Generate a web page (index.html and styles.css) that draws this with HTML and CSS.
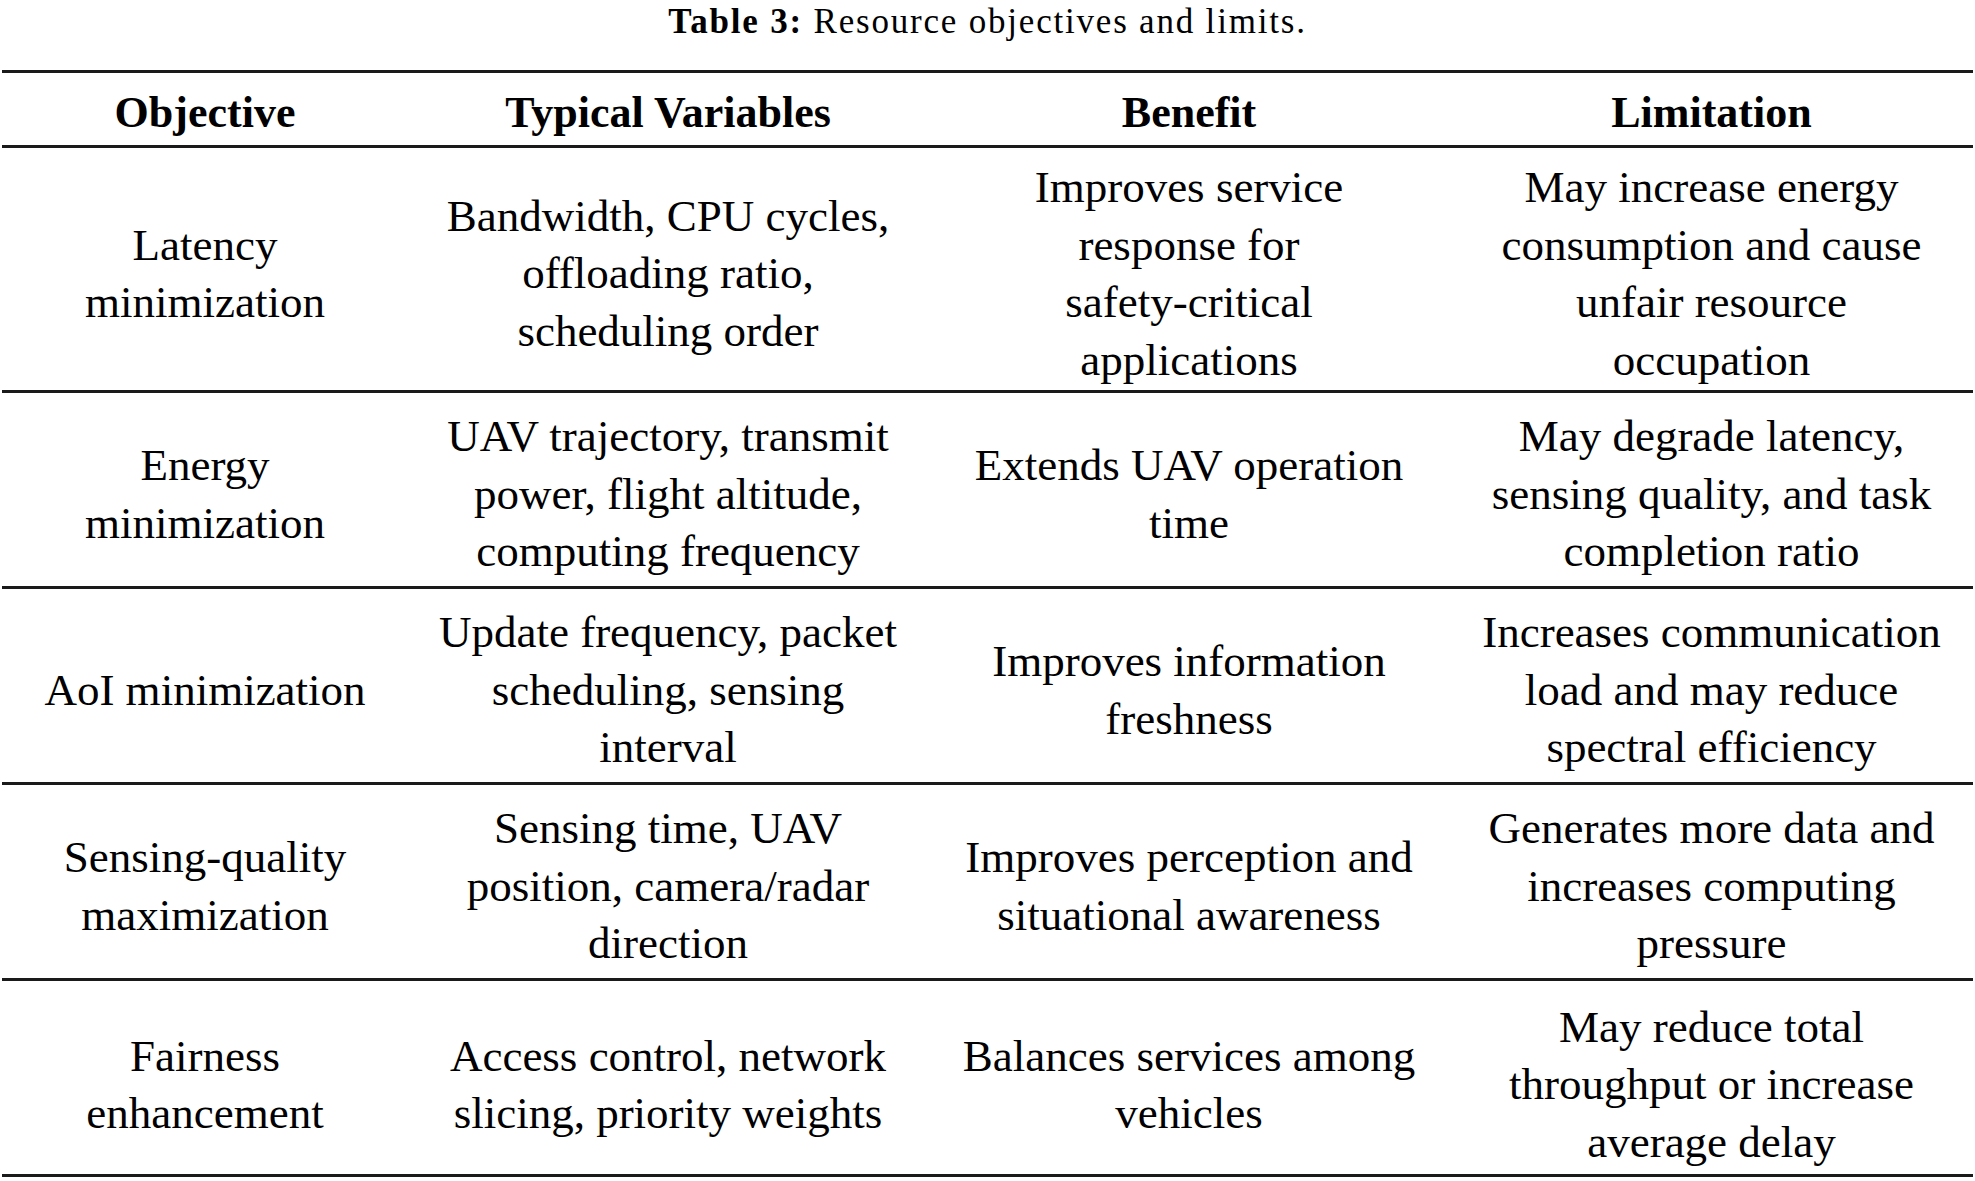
FILE: index.html
```html
<!DOCTYPE html>
<html>
<head>
<meta charset="utf-8">
<link rel="stylesheet" href="styles.css">
</head>
<body>
<div class="caption"><b>Table 3:</b> Resource objectives and limits.</div>
<table class="tbl">
  <colgroup>
    <col class="c1"><col class="c2"><col class="c3"><col class="c4">
  </colgroup>
  <thead>
    <tr class="hrow">
      <th>Objective</th><th>Typical Variables</th><th>Benefit</th><th>Limitation</th>
    </tr>
  </thead>
  <tbody>
    <tr class="row-tall">
      <td>Latency<br>minimization</td>
      <td>Bandwidth, CPU cycles,<br>offloading ratio,<br>scheduling order</td>
      <td>Improves service<br>response for<br>safety-critical<br>applications</td>
      <td>May increase energy<br>consumption and cause<br>unfair resource<br>occupation</td>
    </tr>
    <tr class="row">
      <td>Energy<br>minimization</td>
      <td>UAV trajectory, transmit<br>power, flight altitude,<br>computing frequency</td>
      <td>Extends UAV operation<br>time</td>
      <td>May degrade latency,<br>sensing quality, and task<br>completion ratio</td>
    </tr>
    <tr class="row">
      <td>AoI minimization</td>
      <td>Update frequency, packet<br>scheduling, sensing<br>interval</td>
      <td>Improves information<br>freshness</td>
      <td>Increases communication<br>load and may reduce<br>spectral efficiency</td>
    </tr>
    <tr class="row">
      <td>Sensing-quality<br>maximization</td>
      <td>Sensing time, UAV<br>position, camera/radar<br>direction</td>
      <td>Improves perception and<br>situational awareness</td>
      <td>Generates more data and<br>increases computing<br>pressure</td>
    </tr>
    <tr class="row-last">
      <td>Fairness<br>enhancement</td>
      <td>Access control, network<br>slicing, priority weights</td>
      <td>Balances services among<br>vehicles</td>
      <td>May reduce total<br>throughput or increase<br>average delay</td>
    </tr>
  </tbody>
</table>
</body>
</html>
```
FILE: styles.css
```css
html, body {
  margin: 0;
  padding: 0;
  background: #ffffff;
}
body {
  font-family: "Liberation Serif", "Times New Roman", serif;
  color: #000;
  width: 1975px;
}
.caption {
  text-align: center;
  font-size: 35px;
  letter-spacing: 1.8px;
  line-height: 40px;
  padding-top: 2px;
  height: 35px;
  margin-bottom: 33px;
}
.caption b {
  font-weight: bold;
}
.tbl {
  width: 1971px;
  margin-left: 2px;
  border-collapse: collapse;
  table-layout: fixed;
  border-top: 3px solid #1a1a1a;
  border-bottom: 3px solid #1a1a1a;
}
.c1 { width: 406px; }
.c2 { width: 520px; }
.c3 { width: 522px; }
.c4 { width: 523px; }
.tbl th, .tbl td {
  text-align: center;
  vertical-align: middle;
  padding: 10px 0 0 0;
  font-size: 45px;
  line-height: 57.5px;
}
.tbl th {
  font-weight: bold;
  font-size: 44px;
  padding-top: 8px;
}
.tbl tr {
  border-bottom: 3px solid #1a1a1a;
}
.hrow { height: 75px; }
.row-tall { height: 245px; }
.row { height: 196px; }
.row-last { height: 196px; }
.row-last td { padding-top: 15px; }
```
